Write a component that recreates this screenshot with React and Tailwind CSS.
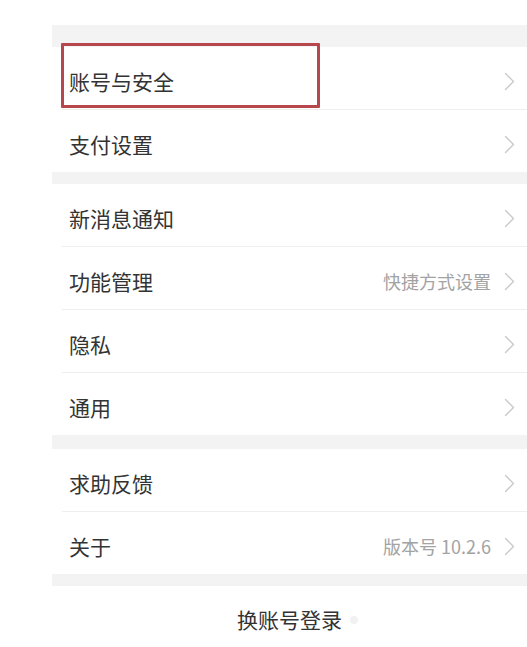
const FONT = { fontFamily: '"Noto Sans CJK SC", "Noto Sans", sans-serif' };

function Chevron() {
  return (
    <svg width="11" height="19" viewBox="0 0 11 19" fill="none" className="shrink-0">
      <polyline points="1.5,1.5 9.5,9.5 1.5,17.5" stroke="#c8c8c8" strokeWidth="1.3" strokeLinejoin="round" strokeLinecap="round" />
    </svg>
  );
}

function Row({ label, value, children }) {
  return (
    <div className="relative h-[62px] flex items-center justify-between pt-[6px] pl-[17px] pr-[12px] bg-white">
      {children}
      <span className="text-[21px] text-[#333333] leading-none">{label}</span>
      <div className="flex items-center gap-[13px]">
        {value && <span className="text-[18px] text-[#a3a3a3] leading-none">{value}</span>}
        <Chevron />
      </div>
    </div>
  );
}

function Divider() {
  return <div className="ml-[10px] h-px bg-[#eeeeee]" />;
}

function Band({ h }) {
  return <div className={`bg-[#f3f3f3] ${h}`} />;
}

export default function App() {
  return (
    <div className="w-[527px] h-[647px] bg-white flex overflow-hidden" style={FONT}>
      <div className="w-[52px] shrink-0" />
      <div className="flex-1 flex flex-col">
        <div className="h-[25px] bg-white" />
        <Band h="h-[22px]" />

        <Row label="账号与安全">
          <div className="absolute left-[9px] top-[-4px] w-[259px] h-[65px] border-[3px] border-[#b5474d] rounded-[1px]" />
        </Row>
        <Divider />
        <Row label="支付设置" />

        <Band h="h-[12px]" />

        <Row label="新消息通知" />
        <Divider />
        <Row label="功能管理" value="快捷方式设置" />
        <Divider />
        <Row label="隐私" />
        <Divider />
        <Row label="通用" />

        <Band h="h-[14px]" />

        <Row label="求助反馈" />
        <Divider />
        <Row label="关于" value="版本号 10.2.6" />

        <Band h="h-[12px]" />

        <div className="flex-1 flex items-center justify-center pt-[6px]">
          <span className="relative text-[21px] text-[#333333] leading-none">
            换账号登录
            <span className="absolute right-[-16px] top-[7px] w-[8px] h-[8px] rounded-full bg-[#f1f1f1]" />
          </span>
        </div>
      </div>
    </div>
  );
}
